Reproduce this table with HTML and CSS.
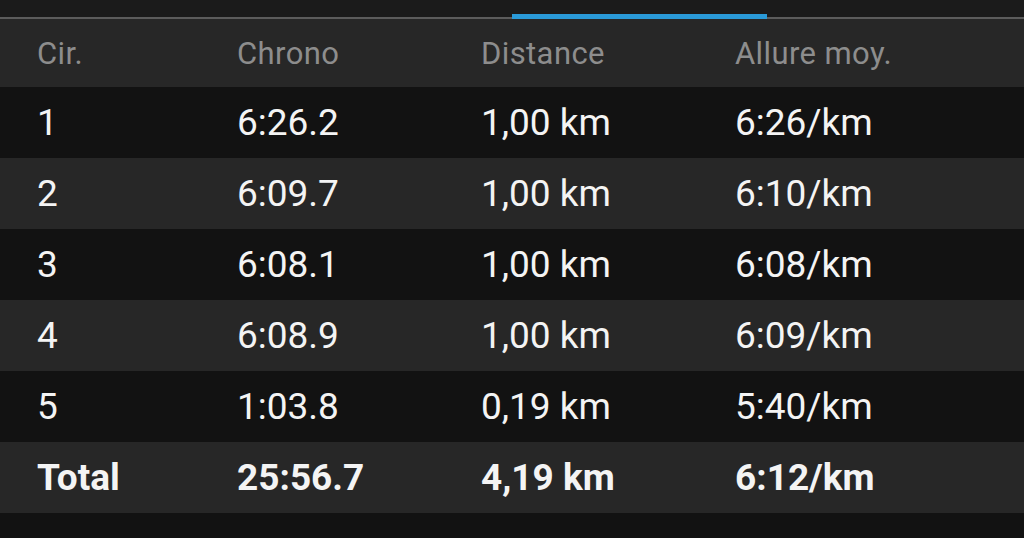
FILE: index.html
```
<!DOCTYPE html>
<html lang="fr">
<head>
    <meta charset="UTF-8">
    <meta name="viewport" content="width=device-width, initial-scale=1.0">
    <title>Circuits</title>
    <link rel="stylesheet" href="styles.css">
</head>
<body>
    <div class="tabs">
        <div class="tab"></div>
        <div class="tab"></div>
        <div class="tab active"></div>
        <div class="tab"></div>
    </div>

    <div class="laps">
        <div class="row head">
            <span>Cir.</span>
            <span>Chrono</span>
            <span>Distance</span>
            <span>Allure moy.</span>
        </div>
        <div class="row">
            <span>1</span><span>6:26.2</span><span>1,00 km</span><span>6:26/km</span>
        </div>
        <div class="row">
            <span>2</span><span>6:09.7</span><span>1,00 km</span><span>6:10/km</span>
        </div>
        <div class="row">
            <span>3</span><span>6:08.1</span><span>1,00 km</span><span>6:08/km</span>
        </div>
        <div class="row">
            <span>4</span><span>6:08.9</span><span>1,00 km</span><span>6:09/km</span>
        </div>
        <div class="row">
            <span>5</span><span>1:03.8</span><span>0,19 km</span><span>5:40/km</span>
        </div>
        <div class="row total">
            <span>Total</span><span>25:56.7</span><span>4,19 km</span><span>6:12/km</span>
        </div>
    </div>
</body>
</html>
```

FILE: styles.css
```
body {
    margin: 0;
    padding: 0;
    background: #121212;
    font-family: 'Roboto', 'Liberation Sans', sans-serif;
    color: #f4f4f4;
    height: 538px;
    overflow: hidden;
}

.tabs {
    display: grid;
    grid-template-columns: 256px 256px 255px 257px;
    height: 19px;
    background: #1b1b1b;
    position: relative;
}

.tabs::after {
    content: '';
    position: absolute;
    left: 0;
    right: 0;
    bottom: 0;
    height: 2px;
    background: #5c5c5c;
}

.tab.active {
    margin-top: 14px;
    background: #2a9ad8;
    position: relative;
    z-index: 1;
}

.row {
    display: grid;
    grid-template-columns: 200px 244px 254px 1fr;
    align-items: center;
    height: 71px;
    padding-left: 37px;
    font-size: 37px;
    background: #121212;
}

.row:nth-child(odd) {
    background: #272727;
}

.row.head {
    height: 68px;
    font-size: 31px;
    letter-spacing: 0.4px;
    color: #8d8d8d;
}

.row.total {
    font-weight: bold;
}
```
